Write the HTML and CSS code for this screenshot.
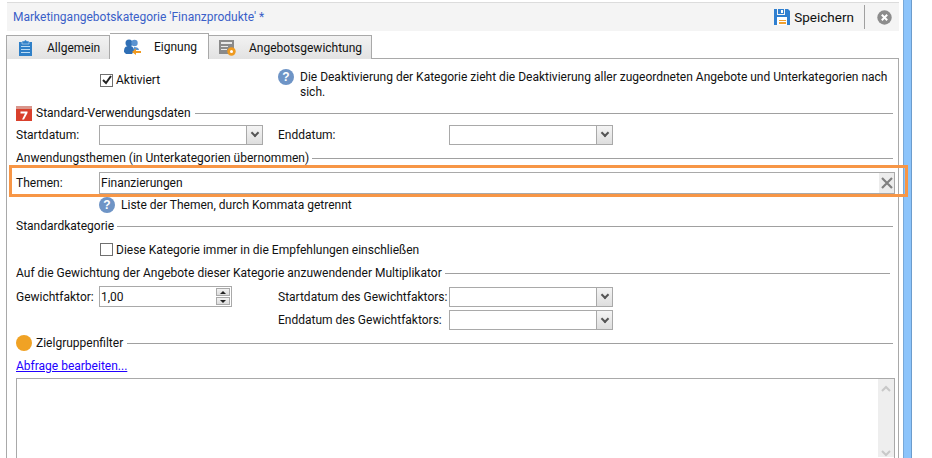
FILE: index.html
```html
<!DOCTYPE html>
<html lang="de">
<head>
    <meta charset="UTF-8">
    <title>Marketingangebotskategorie</title>
    <link rel="stylesheet" href="styles.css">
</head>
<body>
    <div class="page">
        <div class="window">
            <div class="titlebar">
                <div class="title">Marketingangebotskategorie 'Finanzprodukte' *</div>
                <div class="save">
                    <svg width="16" height="16" viewBox="0 0 16 16"><path d="M0 0h3v6h8V0h3l2 2v14H0z" fill="#2f7fd0"/><path d="M4 0h6v5H4z" fill="#2f7fd0"/><path d="M7 1h2v3H7z" fill="#fff"/><path d="M3 8h10v8H3z" fill="#fff"/><path d="M5 11h7v1H5zM5 13h7v2H5z" fill="#f0a030"/></svg>
                    <span>Speichern</span>
                </div>
                <div class="sep"></div>
                <svg class="close" width="15" height="15" viewBox="0 0 15 15"><circle cx="7.500" cy="7.500" r="7.200" fill="#8c8c8c"/><path d="M4.800 4.800l5.400 5.400M10.200 4.800l-5.400 5.400" stroke="#fff" stroke-width="2"/></svg>
            </div>
            <div class="tabs">
                <div class="tab">
                    <svg width="13" height="16" viewBox="0 0 13 16"><path d="M0 2h13v14H0z" fill="#2f80c8"/><path d="M3 1h2.500V0h2v1H10v3H3z" fill="#2f80c8" stroke="#e8f0f8" stroke-width=".5"/><path d="M2 6h9v1H2zM2 9h9v1H2zM2 12h9v1H2z" fill="#bcdcf4"/></svg>
                    <span>Allgemein</span>
                </div>
                <div class="tab active">
                    <svg width="17" height="16" viewBox="0 0 17 16"><circle cx="5" cy="4" r="3.500" fill="#2f6fb5"/><path d="M0 13c0-4 1-6 5-6s5 2 5 5l-2 3H2z" fill="#2f6fb5"/><circle cx="10.500" cy="4" r="3.200" fill="#5b93d0"/><path d="M10 8c3 0 5 1 5 3h-5z" fill="#5b93d0"/><path d="M8 13l4-3.500V12h5v2h-5v2z" fill="#f09a20"/></svg>
                    <span>Eignung</span>
                </div>
                <div class="tab">
                    <svg width="17" height="16" viewBox="0 0 17 16"><path d="M0 0h15v14H0z" fill="#8a8a8a"/><path d="M2 2h11v2H2zM2 6h7v1H2zM2 9h6v1H2z" fill="#e8e8e8"/><circle cx="12.500" cy="11.500" r="4.200" fill="#ee9a20"/><circle cx="12.500" cy="11.500" r="1.500" fill="#fff"/></svg>
                    <span>Angebotsgewichtung</span>
                </div>
            </div>
            <div class="panel">
                <div class="row-top">
                    <label class="check on-top">
                        <span class="box">
                            <svg width="10" height="10" viewBox="0 0 10 10"><path d="M1 5l3 3 5-7" fill="none" stroke="#222" stroke-width="2"/></svg>
                        </span>
                        Aktiviert
                    </label>
                    <div class="note">
                        <span class="info">?</span>
                        <p>Die Deaktivierung der Kategorie zieht die Deaktivierung aller zugeordneten Angebote und Unterkategorien nach sich.</p>
                    </div>
                </div>

                <div class="legend first">
                    <svg width="16" height="16" viewBox="0 0 16 16"><path d="M0 1h16v4H0z" fill="#d9968c"/><path d="M0 4h16v12H0z" fill="#d9402c"/><path d="M4.500 6.500h7v1.500l-3.500 6.500h-2l3-6h-4.500z" fill="#fff"/></svg>
                    <span>Standard-Verwendungsdaten</span>
                </div>
                <div class="row dates">
                    <span class="lbl">Startdatum:</span>
                    <div class="combo"><i class="arrow"></i></div>
                    <span class="lbl2">Enddatum:</span>
                    <div class="combo"><i class="arrow"></i></div>
                </div>

                <div class="legend themes-legend"><span>Anwendungsthemen (in Unterkategorien übernommen)</span></div>
                <div class="row themes">
                    <span class="lbl">Themen:</span>
                    <div class="textbox">
                        <span>Finanzierungen</span>
                        <div class="clear">
                            <svg width="12" height="12" viewBox="0 0 12 12"><path d="M1 1l10 10M11 1L1 11" stroke="#808080" stroke-width="2.200"/></svg>
                        </div>
                    </div>
                </div>
                <div class="hint">
                    <span class="info">?</span>
                    <span>Liste der Themen, durch Kommata getrennt</span>
                </div>

                <div class="legend std-legend"><span>Standardkategorie</span></div>
                <label class="check include">
                    <span class="box"></span>
                    Diese Kategorie immer in die Empfehlungen einschließen
                </label>

                <div class="legend weight-legend"><span>Auf die Gewichtung der Angebote dieser Kategorie anzuwendender Multiplikator</span></div>
                <div class="row weight">
                    <span class="lbl">Gewichtfaktor:</span>
                    <div class="spin">
                        <span>1,00</span>
                        <div class="spin-btns">
                            <div><i class="up"></i></div>
                            <div><i class="down"></i></div>
                        </div>
                    </div>
                    <span class="lbl3">Startdatum des Gewichtfaktors:</span>
                    <div class="combo"><i class="arrow"></i></div>
                </div>
                <div class="row weight-end">
                    <span class="lbl3 push">Enddatum des Gewichtfaktors:</span>
                    <div class="combo"><i class="arrow"></i></div>
                </div>

                <div class="legend target-legend">
                    <span class="dot"></span>
                    <span>Zielgruppenfilter</span>
                </div>
                <a class="query" href="#">Abfrage bearbeiten...</a>
                <div class="memo">
                    <div class="memo-bar">
                        <svg width="10" height="7" viewBox="0 0 10 7"><path d="M1 6l4-4 4 4" fill="none" stroke="#c8c8c8" stroke-width="2"/></svg>
                        <svg width="10" height="7" viewBox="0 0 10 7"><path d="M1 1l4 4 4-4" fill="none" stroke="#c8c8c8" stroke-width="2"/></svg>
                    </div>
                </div>
            </div>
        </div>
        <div class="edge"></div>
    </div>
</body>
</html>
```
FILE: styles.css
```css
* {
    box-sizing: border-box;
}
body {
    margin: 0;
    background: #fff;
    color: #111;
    font-family: Roboto, sans-serif;
    font-size: 12px;
    line-height: 16px;
}
svg {
    flex: none;
}
.page {
    display: flex;
    height: 458px;
    overflow: hidden;
    padding-left: 6px;
}
.window {
    width: 893px;
}
.edge {
    width: 9px;
    margin-left: 4px;
    background: #8cc4fb;
    border-left: 1px solid #78a8d8;
    border-right: 1px solid #6c9ccc;
}

/* title bar */
.titlebar {
    display: flex;
    align-items: center;
    height: 29px;
    margin: 2px 0 0 1px;
    background: #f4f4f4;
    border-top: 1px solid #dcdcdc;
}
.title {
    flex: 1;
    padding-left: 6px;
    color: #3a5fc8;
}
.save {
    display: flex;
    align-items: center;
    gap: 4px;
    font-size: 13.500px;
}
.sep {
    width: 1px;
    height: 24px;
    margin: 0 12px 0 10px;
    background: #a0a0a0;
}
.close {
    margin-right: 7px;
}

/* tabs */
.tabs {
    display: flex;
    align-items: flex-end;
    height: 28px;
    margin-bottom: -1px;
    position: relative;
}
.tab {
    display: flex;
    align-items: center;
    height: 24px;
    padding-left: 12px;
    gap: 15px;
    background: linear-gradient(#f2f2f2, #e2e2e2);
    border: 1px solid #a9a9a9;
    border-bottom: 0;
    border-left: 0;
}
.tab:nth-child(1) {
    width: 104px;
    border-left: 1px solid #a9a9a9;
    padding-left: 12px;
}
.tab:nth-child(2) {
    width: 99px;
    padding-left: 14px;
}
.tab:nth-child(3) {
    width: 163px;
    padding-left: 10px;
    gap: 13px;
}
.tab.active {
    height: 26px;
    background: #fff;
    border-left: 0;
    gap: 13px;
}

/* main panel */
.panel {
    height: 500px;
    padding: 0 3px 0 9px;
    border: 1px solid #a9a9a9;
}
.row-top {
    display: flex;
    height: 30px;
    margin-top: 10px;
}
.check {
    display: flex;
    align-items: center;
    gap: 3px;
    margin-left: 84px;
}
.on-top {
    width: 178px;
    height: 20px;
    padding-top: 2px;
}
.box {
    display: flex;
    align-items: center;
    justify-content: center;
    width: 13px;
    height: 13px;
    background: #fff;
    border: 1px solid #707070;
}
.note {
    display: flex;
    gap: 6px;
    flex: 1;
    padding-right: 6px;
}
.note p {
    margin: 0;
    padding-top: 1px;
    line-height: 15px;
}
.info {
    flex: none;
    width: 16px;
    height: 16px;
    border-radius: 50%;
    background: #6e94c6;
    color: #fff;
    font-family: "Liberation Sans", sans-serif;
    font-size: 12px;
    font-weight: bold;
    line-height: 16px;
    text-align: center;
}

.legend {
    display: flex;
    align-items: center;
    gap: 3px;
    height: 16px;
    margin-right: 2px;
    white-space: nowrap;
}
.legend::after {
    content: "";
    flex: 1;
    height: 1px;
    background: #a0a0a0;
}
.legend.first {
    gap: 4px;
    margin-top: 6px;
}
.themes-legend {
    margin-top: 5px;
}
.std-legend {
    margin-top: 5px;
}
.weight-legend {
    margin-top: 6px;
    margin-right: 5px;
}
.target-legend {
    gap: 4px;
    margin-top: 5px;
}

.row {
    display: flex;
    align-items: center;
    white-space: nowrap;
}
.lbl {
    width: 83px;
}
.lbl2 {
    width: 171px;
    margin-left: 15px;
}
.lbl3 {
    width: 171px;
    margin-left: 46px;
}
.push {
    margin-left: 262px;
}
.dates {
    height: 21px;
    margin-top: 3px;
}
.combo {
    display: flex;
    justify-content: flex-end;
    width: 164px;
    height: 20px;
    background: #fff;
    border: 1px solid #a9a9a9;
}
.arrow {
    display: flex;
    align-items: center;
    justify-content: center;
    width: 16px;
    background: linear-gradient(#f4f4f4, #dedede);
    border-left: 1px solid #a9a9a9;
}
.arrow::after {
    content: "";
    width: 4px;
    height: 4px;
    margin-top: -3px;
    border-right: 2px solid #555;
    border-bottom: 2px solid #555;
    transform: rotate(45deg);
}

/* the highlighted row */
.themes {
    position: relative;
    height: 22px;
    margin-top: 6px;
}
.themes::after {
    content: "";
    position: absolute;
    left: -7px;
    top: -7px;
    width: 893px;
    height: 26px;
    border: 3px solid #f79646;
    pointer-events: none;
}
.textbox {
    display: flex;
    align-items: center;
    justify-content: space-between;
    flex: 1;
    height: 22px;
    padding-left: 1px;
    background: #fff;
    border: 1px solid #a9a9a9;
}
.clear {
    display: flex;
    align-items: center;
    justify-content: center;
    width: 15px;
    height: 20px;
    background: #ececec;
}
.hint {
    display: flex;
    align-items: center;
    gap: 6px;
    height: 16px;
    margin: 3px 0 0 83px;
}
.include {
    height: 20px;
    margin-top: 5px;
    padding-top: 1px;
}

.weight {
    height: 21px;
    margin-top: 5px;
}
.weight-end {
    height: 20px;
    margin-top: 3px;
}
.spin {
    display: flex;
    align-items: center;
    justify-content: space-between;
    width: 133px;
    height: 21px;
    padding-left: 1px;
    border: 1px solid #a9a9a9;
}
.spin-btns {
    display: flex;
    flex-direction: column;
    gap: 1px;
    width: 16px;
    padding: 1px;
}
.spin-btns div {
    display: flex;
    align-items: center;
    justify-content: center;
    height: 8px;
    background: linear-gradient(#f2f2f2, #dcdcdc);
    border: 1px solid #a9a9a9;
}
.up {
    border: 3px solid transparent;
    border-top: 0;
    border-bottom: 3px solid #222;
}
.down {
    border: 3px solid transparent;
    border-bottom: 0;
    border-top: 3px solid #222;
}

.dot {
    width: 16px;
    height: 16px;
    border-radius: 50%;
    background: #f0a224;
}
.query {
    display: block;
    width: fit-content;
    margin-top: 7px;
    color: #2200ff;
}
.memo {
    display: flex;
    justify-content: flex-end;
    height: 100px;
    margin-top: 4px;
    border: 1px solid #a9a9a9;
}
.memo-bar {
    display: flex;
    flex-direction: column;
    justify-content: space-between;
    align-items: center;
    width: 16px;
    height: 78px;
    padding: 6px 0 0;
    background: #eeeeee;
}
```
